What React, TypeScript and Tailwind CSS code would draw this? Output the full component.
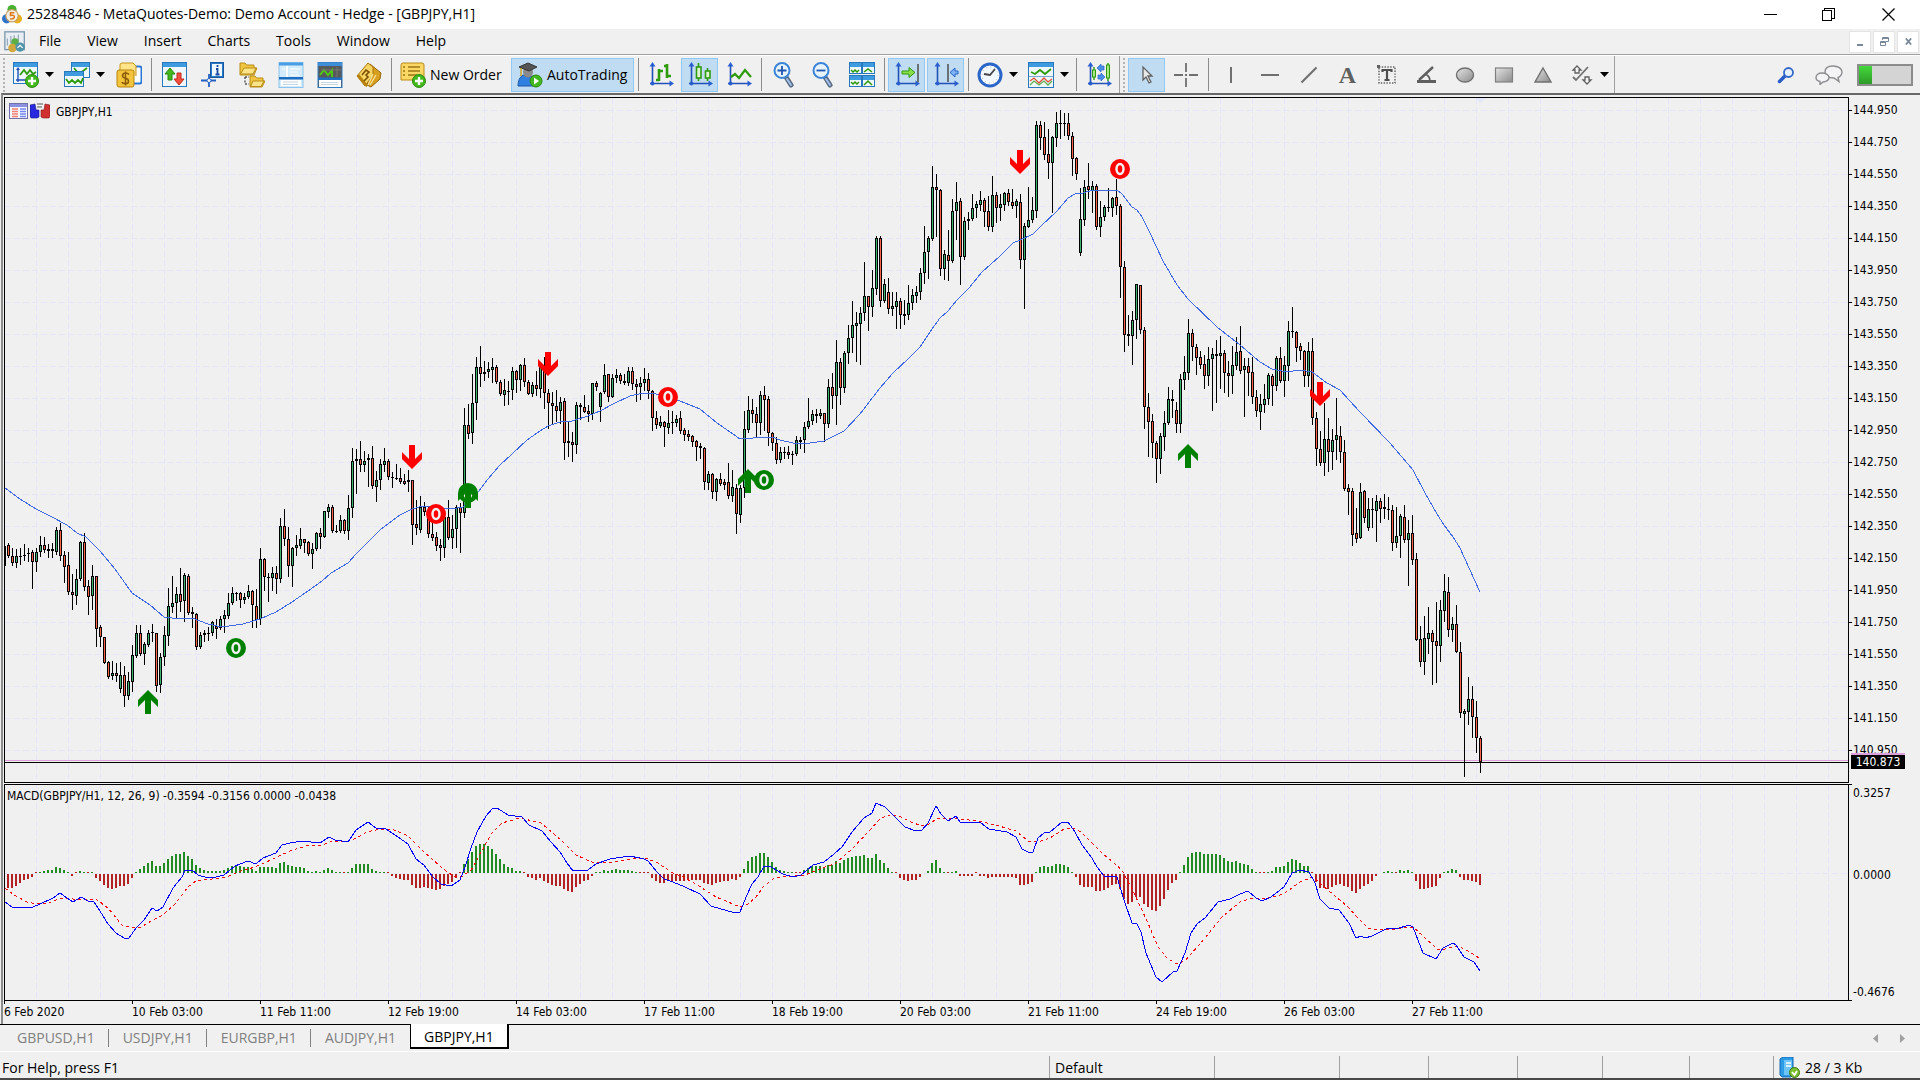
import React from 'react';

const STEP = 4;
const FIRST_BAR = 8;

// high, body top, body bottom, low, direction (g = up, r = down, k = flat)
const CANDLES = `
543 545 556 557 r;548 556 563 565 r;549 556 563 567 g;548 556 557 564 k;544 555 556 560 k;548 553 554 561 k;550 552 562 588 r;548 552 562 571 g;536 545 552 556 g;537 545 550 552 r;
544 549 551 557 k;543 549 551 557 k;527 530 552 554 g;523 530 556 560 r;551 555 567 582 r;552 565 592 594 r;574 592 595 609 r;569 579 596 604 g;541 542 579 580 g;533 542 587 590 r;
580 586 597 614 r;565 576 596 609 g;576 576 629 646 r;625 627 637 646 r;637 637 663 663 r;661 662 677 678 r;661 673 676 679 g;663 673 676 681 r;662 675 689 692 g;666 675 696 706 r;
672 681 696 699 g;645 655 682 691 g;625 633 656 657 g;625 633 654 655 r;642 644 654 664 g;630 633 645 646 g;624 632 633 641 k;633 633 686 691 r;653 657 685 692 g;626 635 657 665 g;
588 606 636 645 g;576 603 607 612 g;587 594 603 617 g;568 594 602 611 r;573 575 601 621 g;574 576 613 614 r;607 612 614 627 k;613 614 647 649 r;632 635 647 648 g;630 633 635 641 g;
627 633 634 640 k;621 622 633 635 g;619 626 629 638 r;616 619 628 629 g;610 615 619 632 g;593 603 616 618 g;587 593 603 604 g;592 593 594 600 k;592 593 600 607 r;593 597 600 603 g;
585 591 597 598 g;590 591 605 627 r;589 606 620 627 r;548 559 619 624 g;558 559 577 590 r;573 577 578 601 k;567 573 578 590 g;566 573 579 593 r;518 526 579 582 g;509 526 539 545 r;
527 539 566 576 r;547 548 566 586 g;535 545 548 555 g;528 539 546 548 g;539 539 543 552 r;541 542 554 555 r;543 549 554 568 g;532 533 549 550 g;528 533 537 548 r;511 511 537 537 g;
504 507 512 517 g;505 507 531 532 r;525 531 532 532 k;515 520 531 532 g;519 520 531 533 r;495 508 531 539 g;448 461 508 517 g;449 459 461 493 k;441 459 465 471 r;451 461 465 471 g;
454 458 460 486 k;446 458 486 488 r;471 480 487 501 g;459 464 480 489 g;448 461 465 471 g;459 461 477 479 r;472 477 478 487 k;464 478 479 479 k;468 478 482 483 r;474 481 484 484 r;
470 480 482 491 g;480 480 525 544 r;500 524 528 534 r;496 507 530 532 g;502 507 512 515 r;507 511 534 537 r;523 534 538 540 r;532 537 546 550 r;539 545 548 560 r;513 517 548 557 g;
500 517 538 539 r;515 529 538 548 g;505 507 529 547 g;503 507 513 552 r;408 425 513 517 g;404 425 434 438 r;374 403 433 443 g;357 367 403 419 g;346 367 374 386 r;361 372 374 380 g;
362 369 372 377 g;358 367 370 382 g;365 367 382 383 r;380 382 394 395 r;379 390 395 405 g;381 391 392 404 k;367 371 390 399 g;370 371 380 392 r;364 365 380 390 g;358 365 382 386 r;
380 382 394 394 r;382 385 394 396 g;371 385 389 395 r;365 367 389 397 g;357 367 393 408 r;389 393 403 428 r;392 403 406 423 r;390 406 411 421 r;397 402 411 423 g;398 401 443 459 r;
421 441 443 456 g;432 442 445 461 r;402 405 445 453 g;403 405 407 419 r;395 407 412 412 r;405 411 414 421 r;383 383 414 419 g;381 383 387 390 r;392 393 407 421 g;364 375 392 393 g;
374 374 397 401 r;374 378 397 397 g;369 375 378 382 g;373 375 381 383 r;374 381 383 384 r;367 371 383 385 g;367 371 384 389 r;379 384 387 401 r;377 383 387 399 g;368 379 383 390 g;
373 379 391 398 r;390 391 418 430 r;411 418 425 428 r;416 422 426 427 g;421 422 427 446 r;410 423 428 433 g;411 422 423 433 k;415 419 423 426 g;411 418 431 433 r;428 430 435 440 r;
430 434 437 440 r;435 436 442 446 r;440 441 447 460 r;443 446 448 458 r;447 448 482 489 r;471 474 483 489 g;473 474 492 498 r;478 479 492 500 g;473 479 484 485 r;479 482 485 489 r;
463 482 496 498 r;470 487 496 501 g;484 488 514 533 r;485 488 515 522 g;411 429 488 497 g;396 410 430 432 g;399 410 414 422 r;407 414 423 437 r;391 395 423 434 g;386 395 400 430 r;
396 399 433 445 r;432 433 443 450 r;437 443 460 463 r;447 452 460 462 g;447 452 453 458 k;446 452 455 458 r;451 454 455 464 k;436 440 454 455 g;437 440 442 448 k;422 427 440 452 g;
398 421 427 428 g;410 414 421 424 g;409 414 416 422 k;409 413 416 418 g;413 413 424 441 r;379 387 424 427 g;373 387 396 408 r;340 362 396 424 g;358 362 388 404 r;351 353 388 392 g;
325 338 353 363 g;301 325 338 352 g;312 323 326 361 g;307 313 324 364 g;262 296 313 320 g;296 296 307 330 r;270 288 307 316 g;236 238 289 294 g;236 238 301 306 r;279 284 301 302 g;
278 292 309 313 r;292 306 309 315 g;292 301 307 328 g;298 301 315 328 r;300 314 316 324 k;285 303 315 319 g;289 295 303 309 g;286 292 296 302 g;268 273 292 299 g;226 252 273 283 g;
236 238 252 278 g;166 187 239 240 g;174 187 190 236 r;189 190 269 275 r;250 254 269 279 g;230 255 261 280 r;199 211 261 262 g;182 202 211 239 g;198 201 257 284 r;217 221 257 259 g;
212 219 221 229 g;194 208 219 220 g;201 204 208 217 g;191 200 205 210 g;198 200 212 226 r;196 211 227 230 r;176 195 227 231 g;192 195 208 222 r;194 204 208 220 g;192 193 205 210 g;
189 193 202 205 r;189 202 206 208 r;199 201 206 217 g;194 202 260 268 r;223 226 260 308 g;187 220 227 227 g;197 210 220 222 g;121 125 211 217 g;121 125 138 149 r;122 137 155 159 r;
129 154 163 178 r;136 137 163 212 g;112 123 138 146 g;110 123 124 138 k;113 123 124 135 k;113 123 136 139 r;132 136 159 175 r;157 158 174 179 r;188 219 253 255 g;180 187 220 225 g;
163 186 190 198 r;181 186 191 212 g;184 186 227 229 r;201 217 227 236 g;205 207 217 220 g;188 207 208 211 k;197 198 208 216 g;179 197 206 214 r;204 206 267 297 r;261 267 335 351 r;
315 334 336 345 k;311 320 336 364 g;284 284 320 338 g;285 285 330 333 r;327 330 407 428 r;393 407 422 456 r;414 421 443 457 r;441 443 459 482 r;433 436 459 473 g;411 423 437 450 g;
387 399 423 424 g;390 399 401 417 k;402 410 424 432 r;374 379 424 432 g;356 372 380 389 g;319 333 373 379 g;329 333 347 360 r;344 347 358 374 r;351 357 365 368 r;355 364 376 388 r;
347 359 376 385 g;348 354 359 410 g;340 354 356 402 k;336 353 356 388 g;350 353 373 392 r;361 373 376 396 r;346 365 376 393 g;337 352 366 369 g;326 351 371 373 r;358 366 370 416 g;
358 366 373 395 r;357 372 397 403 r;390 397 411 416 r;394 404 412 429 g;384 399 405 412 g;373 375 399 404 g;374 376 386 405 r;356 358 386 390 g;347 358 381 382 r;356 365 381 396 g;
321 331 366 380 g;307 331 332 337 k;331 332 348 361 r;343 346 351 359 r;350 351 376 386 r;342 351 376 386 g;338 351 418 424 r;412 418 449 465 r;431 449 463 465 r;403 439 463 475 g;
418 439 452 471 r;429 440 452 469 g;398 435 440 459 g;426 436 452 462 r;440 452 489 490 r;484 488 492 514 r;488 491 535 545 r;508 533 539 542 r;483 492 538 538 g;490 491 518 522 r;
498 509 528 530 g;498 509 510 527 k;495 501 511 541 g;498 501 509 522 r;494 507 509 518 k;497 509 510 519 k;505 510 543 550 r;507 536 543 547 g;514 516 536 557 g;505 517 540 542 r;
520 533 540 585 g;515 533 560 564 r;553 559 640 640 r;626 639 662 666 r;616 638 662 674 g;607 633 639 653 g;630 633 642 684 r;602 641 646 682 r;600 610 646 661 g;574 591 611 621 g;
577 592 630 636 r;617 624 630 641 g;605 624 652 652 r;642 652 713 717 r;709 711 714 776 g;677 699 712 724 g;686 699 717 737 r;701 717 738 752 r;736 738 762 772 r`;

const HISTOGRAM = [
  -14, -14, -12, -9, -6, -5, -3, -1, 1, 2, 3, 3, 6, 5, 3, 1, -2, -1, 2, 1, -1, 1, -4, -7, -11, -14, -15, -14, -12, -12,
  -10, -4, 1, 4, 7, 10, 12, 7, 7, 10, 14, 17, 19, 19, 21, 17, 14, 8, 5, 3, 2, 2, 2, 2, 3, 5, 7, 7, 7, 6,
  6, 4, 2, 6, 6, 6, 6, 5, 10, 11, 8, 7, 6, 6, 5, 2, 1, 2, 1, 3, 5, 3, 1, 1, -1, 1, 5, 9, 9, 9,
  9, 4, 2, 1, 1, -1, -2, -4, -5, -6, -6, -11, -14, -14, -13, -14, -15, -16, -15, -12, -10, -8, -4, -1, 9, 14, 21, 27, 29, 29,
  27, 24, 19, 14, 9, 6, 5, 2, 2, -1, -3, -4, -6, -4, -7, -9, -11, -12, -12, -15, -17, -18, -13, -10, -7, -6, -2, 1, 1, 3,
  2, 3, 4, 3, 3, 3, 2, 1, -1, -1, -1, -4, -7, -9, -9, -7, -7, -7, -7, -7, -6, -6, -6, -6, -9, -10, -11, -9, -8, -7,
  -7, -5, -6, -3, 4, 12, 16, 17, 20, 20, 16, 11, 6, 3, 2, 1, 1, -1, -1, 3, 5, 7, 7, 7, 5, 8, 8, 12, 10, 13,
  15, 16, 17, 17, 18, 15, 15, 19, 13, 10, 5, 1, -1, -4, -6, -7, -6, -6, -3, 0, 2, 10, 13, 5, 1, -1, 1, 2, -2, -2,
  -2, -2, -1, -2, -2, -4, -3, -3, -3, -3, -3, -3, -4, -11, -11, -10, -8, 1, 6, 7, 6, 7, 9, 9, 8, 6, 1, -3, -11, -13,
  -13, -13, -17, -17, -16, -14, -11, -10, -15, -25, -30, -28, -23, -23, -30, -33, -36, -37, -32, -25, -16, -9, -6, 1, 8, 16, 20, 21, 21, 19,
  19, 19, 19, 18, 15, 12, 11, 12, 10, 9, 8, 4, 1, -1, -1, 1, 2, 6, 6, 7, 11, 14, 13, 10, 7, 7, -1, -8, -14, -14,
  -15, -13, -11, -10, -12, -13, -17, -19, -15, -12, -10, -7, -2, 0, 1, 2, 1, -1, 3, 2, 3, 1, -7, -15, -15, -14, -13, -12, -4, 1,
  2, 4, 3, -3, -6, -6, -7, -8, -11,
];

const MOVING_AVERAGE =
  '5,488 20,499 36,509 50,516 67,525 77,533 86,537 100,551 115,569 132,593 150,605 164,617 172,618 192,618 208,624 222,627 243,624 260,619 276,612 292,602 308,591 322,581 331,573 348,563 356,554 367,543 380,530 388,524 400,515 412,509 423,506 443,508 452,509 463,507 478,492 488,479 500,465 512,454 527,440 540,431 548,426 560,422 572,421 588,416 600,411 613,404 630,396 643,393 653,393 667,398 680,401 700,409 717,423 733,434 740,439 753,438 765,437 772,437 780,440 793,443 803,444 824,441 844,431 860,414 873,397 880,388 893,373 908,359 920,347 932,329 940,318 948,311 957,300 969,288 982,272 1000,256 1013,243 1020,240 1033,234 1040,227 1057,211 1068,198 1075,194 1083,193 1093,190 1097,190 1117,190 1122,194 1132,207 1137,210 1142,217 1150,233 1163,261 1177,285 1188,299 1217,327 1240,345 1260,362 1272,369 1287,372 1300,370 1312,372 1327,383 1340,390 1360,412 1390,443 1413,470 1425,493 1437,514 1444,525 1453,537 1460,548 1470,570 1480,592';

const MACD_LINE =
  '5,902 12,907 17,908 33,907 40,904 53,898 60,893 67,898 73,902 81,897 88,901 94,902 100,911 108,924 116,933 124,938 129,938 136,928 144,920 152,908 157,911 163,907 173,888 182,877 185,870 192,870 198,875 208,878 216,877 224,875 235,866 248,861 256,864 263,858 276,853 282,845 290,843 302,841 320,843 329,837 335,840 348,842 356,830 368,822 376,828 386,829 398,837 408,844 416,859 424,865 433,877 441,884 451,886 460,880 465,867 471,848 477,832 486,816 493,808 497,808 508,815 522,817 529,825 542,831 551,842 560,852 567,863 573,871 580,870 588,870 596,864 610,859 629,856 640,858 644,859 648,861 657,872 664,879 673,882 685,887 700,894 711,906 728,911 736,913 740,912 747,895 752,884 758,877 764,866 771,867 783,874 793,877 801,875 813,865 824,862 834,854 842,847 852,832 864,818 872,813 876,803 885,807 895,817 905,827 916,831 922,830 928,823 936,806 941,814 948,821 956,816 960,822 981,823 989,829 1007,832 1016,837 1022,849 1028,852 1033,852 1038,838 1044,833 1050,832 1062,822 1068,822 1075,832 1082,845 1092,858 1097,867 1104,876 1117,877 1124,900 1132,923 1137,924 1141,932 1146,953 1156,977 1162,982 1173,972 1177,971 1185,953 1191,933 1197,924 1205,918 1218,902 1230,899 1240,894 1248,891 1256,898 1262,901 1271,897 1280,890 1284,887 1292,873 1300,870 1309,872 1315,883 1320,899 1329,908 1339,910 1349,923 1356,938 1361,936 1365,938 1372,936 1388,928 1396,929 1409,925 1413,927 1423,953 1436,959 1443,948 1453,943 1456,945 1464,957 1474,962 1480,971';

const SIGNAL_LINE =
  '5,888 14,895 27,902 37,904 49,903 61,898 73,899 96,899 108,908 122,925 133,928 141,927 153,920 163,915 176,903 188,887 196,881 212,879 227,877 241,871 255,867 273,859 290,851 306,846 322,845 333,841 349,841 357,838 367,832 380,829 394,830 408,836 424,852 441,867 453,876 463,876 471,870 476,862 486,843 492,833 502,823 520,818 541,823 561,840 576,855 594,863 612,862 640,858 648,859 658,863 671,872 685,878 699,886 716,897 740,907 748,904 756,897 764,886 773,879 781,877 805,875 820,869 836,863 852,849 869,831 881,818 889,815 899,816 911,822 922,826 929,824 938,818 954,818 983,822 999,826 1016,831 1028,841 1038,842 1050,838 1064,829 1073,828 1081,832 1101,852 1122,870 1134,893 1148,923 1158,947 1167,958 1177,964 1185,961 1205,938 1222,917 1240,902 1252,898 1264,899 1280,895 1288,891 1300,882 1313,877 1321,884 1329,891 1347,906 1358,918 1368,928 1380,930 1396,929 1413,927 1423,936 1437,949 1445,949 1458,946 1468,951 1479,958';

const PRICES = [
  '144.950', '144.750', '144.550', '144.350', '144.150', '143.950', '143.750', '143.550', '143.350',
  '143.150', '142.950', '142.750', '142.550', '142.350', '142.150', '141.950', '141.750', '141.550',
  '141.350', '141.150', '140.950',
];

const TIMES = [
  '6 Feb 2020', '10 Feb 03:00', '11 Feb 11:00', '12 Feb 19:00', '14 Feb 03:00', '17 Feb 11:00',
  '18 Feb 19:00', '20 Feb 03:00', '21 Feb 11:00', '24 Feb 19:00', '26 Feb 03:00', '27 Feb 11:00',
];

const MENUS = ['File', 'View', 'Insert', 'Charts', 'Tools', 'Window', 'Help'];

const CHART_TABS = ['GBPUSD,H1', 'USDJPY,H1', 'EURGBP,H1', 'AUDJPY,H1', 'GBPJPY,H1'];

const GRID_X = Array.from({ length: 120 }, (_, i) => 36 + i * 32);
const GRID_Y = Array.from({ length: 21 }, (_, i) => 110 + i * 32);

const candles = CANDLES.trim().split(';').map((row, i) => {
  const [high, top, bottom, low, dir] = row.trim().split(' ');
  return { x: FIRST_BAR + i * STEP, high: +high, top: +top, bottom: +bottom, low: +low, dir };
});

const FILL: Record<string, string> = { g: '#3cb371', r: '#ff6347', k: '#000' };

type Mark = { kind: 'up' | 'down' | 'zero'; x: number; y: number; color: string };

const MARKS: Mark[] = [
  { kind: 'up', x: 148, y: 702, color: '#008000' },
  { kind: 'zero', x: 236, y: 648, color: '#008000' },
  { kind: 'down', x: 412, y: 457, color: '#ff0000' },
  { kind: 'zero', x: 436, y: 514, color: '#ff0000' },
  { kind: 'zero', x: 468, y: 493, color: '#008000' },
  { kind: 'up', x: 468, y: 496, color: '#008000' },
  { kind: 'down', x: 548, y: 364, color: '#ff0000' },
  { kind: 'zero', x: 668, y: 397, color: '#ff0000' },
  { kind: 'up', x: 748, y: 481, color: '#008000' },
  { kind: 'zero', x: 764, y: 480, color: '#008000' },
  { kind: 'down', x: 1020, y: 162, color: '#ff0000' },
  { kind: 'zero', x: 1120, y: 169, color: '#ff0000' },
  { kind: 'up', x: 1188, y: 456, color: '#008000' },
  { kind: 'down', x: 1320, y: 394, color: '#ff0000' },
];

const SignalMark = ({ kind, x, y, color }: Mark) => {
  if (kind === 'zero') {
    return (
      <g>
        <circle cx={x} cy={y} r="10" fill={color} />
        <ellipse cx={x} cy={y} rx="3.5" ry="5" fill="none" stroke="#f0f0f0" strokeWidth="2.5" />
      </g>
    );
  }
  const flip = kind === 'down' ? 'scale(1 -1)' : '';
  return (
    <path
      transform={`translate(${x} ${y}) ${flip}`}
      d="M0 -12 L10 -2 V5 L3 -2 V12 H-3 V-2 L-10 5 V-2 Z"
      fill={color}
    />
  );
};

const PriceChart = () => (
  <svg className="absolute inset-0 w-full h-full" role="img" aria-label="GBPJPY H1 price chart">
    <g transform="translate(-5 -98)">
      <g stroke="#e6e6fa" strokeDasharray="6 3" shapeRendering="crispEdges">
        {GRID_X.map((x) => (
          <line key={x} x1={x + 0.5} x2={x + 0.5} y1="98" y2="900" />
        ))}
        {GRID_Y.map((y) => (
          <line key={y} x1="5" x2="4000" y1={y + 0.5} y2={y + 0.5} />
        ))}
      </g>
      <path d="M1475 98 H1486 L1480.5 103 Z" fill="#e6e6fa" />
      <g shapeRendering="crispEdges">
        <line x1="5" x2="4000" y1="760.5" y2="760.5" stroke="#dda0dd" />
        <rect x="5" y="546" width="1" height="20" />
        {candles.map((c) => (
          <g key={c.x}>
            <rect x={c.x} y={c.high} width="1" height={c.low - c.high + 1} />
            <rect x={c.x - 1} y={c.top} width="3" height={c.bottom - c.top} />
            {c.bottom - c.top > 2 && (
              <rect x={c.x} y={c.top + 1} width="1" height={c.bottom - c.top - 2} fill={FILL[c.dir]} />
            )}
          </g>
        ))}
        <line x1="5" x2="4000" y1="762.5" y2="762.5" stroke="#000" />
        <polyline points={MOVING_AVERAGE} fill="none" stroke="#4169e1" />
      </g>
      {MARKS.map((m) => (
        <SignalMark key={`${m.kind}${m.x}`} {...m} />
      ))}
    </g>
  </svg>
);

const MacdChart = () => (
  <svg className="absolute inset-0 w-full h-full" role="img" aria-label="MACD indicator">
    <g transform="translate(-5 -785)" shapeRendering="crispEdges">
      <g stroke="#e6e6fa" strokeDasharray="6 3">
        {GRID_X.map((x) => (
          <line key={x} x1={x + 0.5} x2={x + 0.5} y1="785" y2="1400" />
        ))}
        <line x1="5" x2="4000" y1="873.5" y2="873.5" />
      </g>
      {HISTOGRAM.map((h, i) => {
        const x = FIRST_BAR + i * STEP - 1;
        if (h === 0) return null;
        return h > 0 ? (
          <rect key={i} x={x} y={873 - h} width="2" height={h} fill="#228b22" />
        ) : (
          <rect key={i} x={x} y={h === -1 ? 872 : 874} width="2" height={-h} fill="#b22222" />
        );
      })}
      <polyline points={SIGNAL_LINE} fill="none" stroke="#ff0000" strokeDasharray="3 3" />
      <polyline points={MACD_LINE} fill="none" stroke="#0000ff" />
    </g>
  </svg>
);

/* ---------- icons ---------- */

const Svg = ({ children, className = 'w-[26px] h-[26px]' }: { children: React.ReactNode; className?: string }) => (
  <svg viewBox="0 0 26 26" className={`${className} shrink-0`} fill="none" aria-hidden="true">
    {children}
  </svg>
);

const Plus = () => (
  <>
    <circle cx="19" cy="19" r="6.5" fill="#43b81c" stroke="#2b8a0e" />
    <path d="M19 15v8M15 19h8" stroke="#fff" strokeWidth="2.4" />
  </>
);

const Pane = ({ x, y, w, h }: { x: number; y: number; w: number; h: number }) => (
  <>
    <rect x={x + 0.5} y={y + 0.5} width={w - 1} height={h - 1} fill="#eef7fd" stroke="#2878bd" />
    <rect x={x + 1} y={y + 1} width={w - 2} height="4" fill="#3f9be0" />
  </>
);

const Axes = () => (
  <>
    <path d="M4.5 3v20M2 21.5h20" stroke="#2050b8" strokeWidth="1.6" />
    <path d="M4.5 0l3 4.5h-6zM26 21.5l-4.500 3v-6z" fill="#2a5fd0" />
    <circle cx="4.5" cy="21.5" r="2" fill="#2a5fd0" />
  </>
);

const IconNewChart = () => (
  <Svg>
    <Pane x={0} y={0} w={25} h={22} />
    <path d="M5 7v13M3 18h14" stroke="#2050b8" strokeWidth="1.4" />
    <path d="M5 5l2 3H3z" fill="#2050b8" />
    <path d="M7 13l4-5 3 4 3-4 3 4 3-2" stroke="#2e9b0c" strokeWidth="1.8" />
    <Plus />
  </Svg>
);

const IconProfiles = () => (
  <Svg>
    <Pane x={7} y={0} w={19} h={16} />
    <path d="M10 6l5 6 8-6" stroke="#2e9b0c" strokeWidth="1.8" />
    <Pane x={0} y={9} w={20} h={16} />
    <path d="M2 17l3 4 3-3 3 3 3-3 3 3 2-5" stroke="#2e9b0c" strokeWidth="1.8" />
  </Svg>
);

const IconSymbols = () => (
  <Svg>
    <rect x="9.500" y="4.500" width="16" height="17" rx="2" fill="#fff" stroke="#2878d8" strokeWidth="2" />
    <path d="M4 8V3q0-2 2-2h11l3 3v10" fill="#ffe48a" stroke="#c89418" />
    <rect x="1" y="8" width="17" height="17" rx="2" fill="#f3c53c" stroke="#b88410" />
    <path d="M13 12.500q-1-1.500-3.500-1.500T6.500 13.500q0 2 3 2.700t3 3q0 2.500-3 2.500T6 20M9.500 9.500v14" stroke="#8c5c08" strokeWidth="1.5" />
  </Svg>
);

const IconMarketWatch = () => (
  <Svg>
    <Pane x={1} y={0} w={25} h={25} />
    <path d="M9 6l5 6h-3v6H7v-6H4z" fill="#43b81c" stroke="#2b8a0e" />
    <path d="M18 23l5-6h-3v-6h-4v6h-3z" fill="#f2503c" stroke="#c02a1a" />
  </Svg>
);

const IconDataWindow = () => (
  <Svg>
    <rect x="10.500" y="0.500" width="13" height="15" fill="#2878c8" stroke="#1858a0" />
    <rect x="12" y="2" width="10" height="12" fill="#eef7fd" />
    <path d="M17.500 3v2M16 7h1.500v5M15.500 12.500h4" stroke="#1848a0" strokeWidth="1.8" />
    <path d="M9 12v13M1 18.500h15" stroke="#2460c0" strokeWidth="1.8" />
    <circle cx="9" cy="18.500" r="2" fill="#fff" stroke="#2460c0" />
  </Svg>
);

const IconNavigator = () => (
  <Svg>
    <path d="M1 12V1h5l1.500 2H15v3h3l-3 7H1z" fill="#f0c540" stroke="#b98c18" />
    <path d="M1.500 12L5 6h12l-3 6z" fill="#fbe48a" stroke="#b98c18" />
    <path d="M6 15v7M6 15h4M6 22h4" stroke="#555" strokeDasharray="2 1.500" strokeWidth="1.400" />
    <path d="M11 25V14h5l1.500 2H24v3h2l-3 6z" fill="#f0c540" stroke="#b98c18" />
    <path d="M11.500 24.500L14 19h11l-3 5.500z" fill="#fbe48a" stroke="#b98c18" />
  </Svg>
);

const IconToolbox = () => (
  <Svg>
    <rect x="1" y="0.500" width="24" height="25" fill="#d3ebfb" stroke="#8cc4ee" />
    <rect x="1" y="0.500" width="24" height="3" fill="#4a9fe4" />
    <path d="M9 4v11" stroke="#fff" strokeWidth="2" />
    <path d="M4 7h3M12 7h10M12 10h8M12 13h9" stroke="#fff" />
    <rect x="1" y="15" width="24" height="2.500" fill="#1f6fc0" />
    <path d="M3 18h20v6H3z" fill="#fff" />
    <path d="M5 20h15M5 22.500h15" stroke="#c4d4e0" />
  </Svg>
);

const IconTester = () => (
  <Svg>
    <rect x="1" y="0.500" width="24" height="25" fill="#595959" stroke="#2f7cc2" />
    <rect x="1" y="0.500" width="24" height="3.500" fill="#3f8fd8" />
    <path d="M3 13l4-5 4 5 4-5v7" stroke="#4ed010" strokeWidth="1.800" />
    <path d="M20 5v10M4 8h20" stroke="#777" />
    <rect x="1" y="15.500" width="24" height="2.500" fill="#1f6fc0" />
    <path d="M2 18h22v7H2z" fill="#fff" />
    <path d="M4 20.500h17M4 22.500h17" stroke="#c4d4e0" />
  </Svg>
);

const IconMetaEditor = () => (
  <Svg>
    <path d="M14 2l11 9-1 6-9 8-4-2 4-12z" fill="#d9a020" stroke="#94640a" />
    <path d="M1 14L12 1l5 4v8l-8 11z" fill="#f6d565" stroke="#a87408" />
    <path d="M1 14l8 10 2 1v-3L3 12z" fill="#b98210" />
    <path d="M6 13l4-5 3 2-3 3 2 2-4 4" stroke="#7c5004" strokeWidth="1.600" />
    <path d="M17 12l-5 11M20 13l-6 10" stroke="#fae9a4" strokeWidth="1.200" />
  </Svg>
);

const IconNewOrder = () => (
  <Svg>
    <path d="M1 3q0-2 2-2h19q2 0 2 2v15H1z" fill="#f9d865" stroke="#b98c18" />
    <path d="M8 5h12M8 9h12M8 13h9" stroke="#9a7414" strokeWidth="1.500" />
    <path d="M3 5h2M3 9h2M3 13h2" stroke="#9a7414" strokeWidth="1.500" />
    <Plus />
  </Svg>
);

const IconAutoTrading = () => (
  <Svg>
    <path d="M1 24q0-8 5-11l5 2 5-1q5 2 5 10z" fill="#2f80e0" stroke="#1c55a8" />
    <ellipse cx="11" cy="10" rx="5" ry="5.500" fill="#8a8a8a" />
    <path d="M2 5l9-4 9 4-8 4z" fill="#555" stroke="#333" />
    <path d="M4 6v8" stroke="#c9a020" strokeWidth="1.500" />
    <circle cx="19" cy="19" r="6" fill="#43b81c" stroke="#2b8a0e" />
    <path d="M17 15.500v7l5-3.500z" fill="#fff" />
  </Svg>
);

const IconBars = () => (
  <Svg>
    <Axes />
    <path d="M11 7v12M8 18h3M11 9h4M19 2v14M16 4h3M19 14h4" stroke="#2e9b0c" strokeWidth="2.600" />
  </Svg>
);

const IconCandles = () => (
  <Svg>
    <Axes />
    <path d="M11.500 1v18M20.500 6v13" stroke="#2e9b0c" strokeWidth="1.600" />
    <rect x="9.500" y="5" width="4.500" height="11" fill="#dff5d2" stroke="#2e9b0c" strokeWidth="1.600" />
    <rect x="18.500" y="9" width="4.500" height="7" fill="#dff5d2" stroke="#2e9b0c" strokeWidth="1.600" />
  </Svg>
);

const IconLine = () => (
  <Svg>
    <Axes />
    <path d="M5 15l4-3 4 4 6-8 6 7" stroke="#2e9b0c" strokeWidth="2.200" />
  </Svg>
);

const Magnifier = ({ plus }: { plus?: boolean }) => (
  <Svg>
    <path d="M15 15l5 8" stroke="#5a6a80" strokeWidth="5" strokeLinecap="round" />
    <path d="M16 17l4 6" stroke="#9fc0ee" strokeWidth="2" strokeLinecap="round" />
    <circle cx="11" cy="8.500" r="7.500" fill="#e8f4fd" stroke="#3b84d8" strokeWidth="2" />
    <path d={plus ? 'M11 4v9M6.500 8.500h9' : 'M6.500 8.500h9'} stroke="#1f56b0" strokeWidth="1.800" />
  </Svg>
);

const IconTile = () => (
  <Svg>
    <Pane x={0} y={0} w={13} h={12} />
    <Pane x={13} y={0} w={13} h={12} />
    <Pane x={0} y={13} w={13} h={12} />
    <Pane x={13} y={13} w={13} h={12} />
    <path d="M2 8l2 2 2-2 2 2 2-2M15 10l4-3 4 3M2 20l2 2 2-2 2 2 2-2M15 23l4-4 4 4" stroke="#2e9b0c" strokeWidth="1.500" />
  </Svg>
);

const IconAutoScroll = () => (
  <Svg>
    <Axes />
    <path d="M24 2v18" stroke="#444" strokeWidth="1.400" />
    <path d="M8 9h7V5.500l6 5-6 5V12H8z" fill="#8ade4c" stroke="#2e9b0c" />
  </Svg>
);

const IconShift = () => (
  <Svg>
    <Axes />
    <path d="M15 2v18" stroke="#444" strokeWidth="1.400" />
    <path d="M25 9h-3V6l-5 4.500 5 4.500v-3h3z" fill="#7ab4f4" stroke="#2a62c8" />
  </Svg>
);

const IconClock = () => (
  <Svg>
    <circle cx="13" cy="13" r="11" fill="#fff" stroke="#2a66c8" strokeWidth="3" />
    <circle cx="13" cy="13" r="8" fill="#f2f8ff" stroke="#a8b8d0" strokeDasharray="1 3.200" />
    <path d="M7 12l6 1 5-6" stroke="#444" strokeWidth="1.800" />
  </Svg>
);

const IconTemplates = () => (
  <Svg>
    <Pane x={0} y={0} w={26} h={26} />
    <path d="M3 10l4 2 5-4 5 4 6-5" stroke="#2e9b0c" strokeWidth="1.800" />
    <path d="M1 14.500h24" stroke="#7aa8c8" />
    <path d="M2 19l4-3 5 5 5-5 4 4 4-3" stroke="#e05038" strokeWidth="1.300" />
    <path d="M2 23l4-4 5 4 5-4 4 4 4-4" stroke="#60b050" strokeWidth="1.300" />
  </Svg>
);

const IconTradeLevels = () => (
  <Svg>
    <Axes />
    <path d="M8 5v13M22 1v18" stroke="#2e9b0c" strokeWidth="1.400" />
    <rect x="6.500" y="8" width="3" height="7" fill="#a8e888" stroke="#2e9b0c" />
    <rect x="20.500" y="3" width="3" height="13" fill="#a8e888" stroke="#2e9b0c" />
    <path d="M18 4h-3V2l-4 4 4 4V8h3zM12 13h3v-2l4 4-4 4v-2h-3z" fill="#4a90e8" stroke="#2a62c8" strokeWidth="0.700" />
  </Svg>
);

const IconCursor = () => (
  <Svg>
    <path d="M9 5v13l3-3 3 6 2-1-3-6h4z" fill="#e8e8e8" stroke="#606060" strokeWidth="1.300" />
  </Svg>
);

const IconCrosshair = () => (
  <Svg>
    <path d="M13 1v9M13 16v9M1 13h9M16 13h9M12 13h2" stroke="#707070" strokeWidth="1.800" />
  </Svg>
);

const IconVLine = () => (
  <Svg>
    <path d="M13 5v16" stroke="#707070" strokeWidth="2" />
  </Svg>
);

const IconHLine = () => (
  <Svg>
    <path d="M4 13h18" stroke="#707070" strokeWidth="2" />
  </Svg>
);

const IconTrend = () => (
  <Svg>
    <path d="M5.500 20.500L20.500 5.500" stroke="#707070" strokeWidth="2.200" />
  </Svg>
);

const IconTextLabel = () => (
  <Svg>
    <rect x="5" y="5" width="16" height="16" stroke="#606060" strokeWidth="1.400" strokeDasharray="1.400 1.400" />
    <path d="M8.500 10V8h9v2M13 8v10M10.500 18h5" stroke="#505050" strokeWidth="2.200" />
    <rect x="3" y="3" width="3" height="3" fill="#606060" />
  </Svg>
);

const IconAngle = () => (
  <Svg>
    <path d="M20 5L6 18" stroke="#606060" strokeWidth="2.400" />
    <path d="M4 19.500h19" stroke="#606060" strokeWidth="3" />
    <path d="M12 12q5 2 5 7" stroke="#606060" strokeWidth="1.800" />
  </Svg>
);

const Shade = ({ id }: { id: string }) => (
  <defs>
    <linearGradient id={id} x1="0" y1="0" x2="1" y2="1">
      <stop offset="0" stopColor="#e4e4e4" />
      <stop offset="1" stopColor="#8c8c8c" />
    </linearGradient>
  </defs>
);

const IconEllipse = () => (
  <Svg>
    <Shade id="shade-ellipse" />
    <ellipse cx="13" cy="13" rx="8.500" ry="7" fill="url(#shade-ellipse)" stroke="#707070" strokeWidth="1.400" />
  </Svg>
);

const IconRect = () => (
  <Svg>
    <Shade id="shade-rect" />
    <rect x="4.500" y="6" width="17" height="14" fill="url(#shade-rect)" stroke="#808080" strokeWidth="1.200" />
  </Svg>
);

const IconTriangle = () => (
  <Svg>
    <Shade id="shade-triangle" />
    <path d="M13 6l8 14H5z" fill="url(#shade-triangle)" stroke="#707070" strokeWidth="1.400" />
  </Svg>
);

const IconObjects = () => (
  <Svg>
    <path d="M9 4l4 4h-2v3H7V8H5zM19 22l-4-4h2v-3h4v3h2z" fill="#f4f4f4" stroke="#606060" strokeWidth="1.300" />
    <path d="M5 15l3 3 12-13" stroke="#707070" strokeWidth="1.800" />
  </Svg>
);

const AppLogo = () => (
  <Svg className="w-[20px] h-[20px]">
    <circle cx="6" cy="18" r="6" fill="#2f74c8" />
    <circle cx="20" cy="18" r="6" fill="#e8b020" />
    <circle cx="13" cy="6" r="6" fill="#48b030" />
    <circle cx="13" cy="14" r="8" fill="#f4f0e8" stroke="#c8a060" strokeWidth="1.500" />
    <path d="M16 10h-5v3.500q5-1 5 2t-5.500 2.500" stroke="#e07818" strokeWidth="2" />
  </Svg>
);

const ChartDocIcon = () => (
  <Svg className="w-[22px] h-[22px]">
    <rect x="1" y="1" width="23" height="21" fill="#e8eef4" stroke="#7894ac" strokeWidth="1.500" />
    <path d="M4 17V9M8 15V6M12 13V5M17 12V4" stroke="#9aacba" strokeWidth="1.500" />
    <circle cx="13" cy="13" r="4.500" fill="#5cae48" />
    <circle cx="10" cy="20" r="5" fill="#d0a83c" />
    <circle cx="19" cy="19" r="5.500" fill="#4f94a8" />
    <path d="M16 20l3-3 3 3" stroke="#fff" strokeWidth="1.500" />
  </Svg>
);

/* ---------- toolbar parts ---------- */

type ToolProps = { label: string; active?: boolean; drop?: boolean; children: React.ReactNode };

const Tool = ({ label, active, drop, children }: ToolProps) => (
  <button
    type="button"
    aria-label={label}
    title={label}
    aria-pressed={active}
    className={`h-[34px] shrink-0 flex items-center border ${drop ? 'w-[49px] pl-1' : 'w-[37px] justify-center'} ${
      active ? 'bg-[#c0dcf3] border-[#90c8f6]' : 'border-transparent'
    }`}
  >
    {children}
    {drop && (
      <svg viewBox="0 0 9 5" className="w-[9px] h-[5px] ml-[6px] shrink-0" aria-hidden="true">
        <path d="M0 0h9L4.500 5z" />
      </svg>
    )}
  </button>
);

const Sep = () => (
  <div className="w-1 h-[33px] shrink-0 flex justify-center">
    <div className="w-px bg-[#8c8c8c]" />
  </div>
);

const Grip = () => <div className="w-0.5 h-[34px] mx-px shrink-0 border-l-2 border-dotted border-[#b4b4b4]" />;

const TitleBar = () => (
  <header className="h-[29px] shrink-0 bg-white flex items-center pl-0.5">
    <AppLogo />
    <h1 className="ml-[5px] pb-0.5 text-[14px] leading-5 whitespace-nowrap">
      25284846 - MetaQuotes-Demo: Demo Account - Hedge - [GBPJPY,H1]
    </h1>
    <div className="ml-auto flex h-full">
      <button type="button" aria-label="Minimize" className="w-[58px] flex items-center justify-center">
        <svg viewBox="0 0 13 13" className="w-[13px] h-[13px]" stroke="#000" shapeRendering="crispEdges">
          <path d="M0 6.500h13" />
        </svg>
      </button>
      <button type="button" aria-label="Restore" className="w-[58px] flex items-center justify-center">
        <svg viewBox="0 0 13 13" className="w-[13px] h-[13px]" fill="none" stroke="#000" shapeRendering="crispEdges">
          <path d="M0.500 2.500h9v10h-9zM2.500 2V0.500h10v10H10" />
        </svg>
      </button>
      <button type="button" aria-label="Close" className="w-[63px] flex items-center justify-center">
        <svg viewBox="0 0 13 13" className="w-[13px] h-[13px]" stroke="#000" strokeWidth="1.200">
          <path d="M0.500 0.500l12 12M12.500 0.500l-12 12" />
        </svg>
      </button>
    </div>
  </header>
);

const MenuBar = () => (
  <nav className="h-[26px] shrink-0 flex items-center pl-1 border-b border-[#a0a0a0]">
    <ChartDocIcon />
    {MENUS.map((menu) => (
      <button key={menu} type="button" className="px-[13px] pb-0.5 text-[14px] leading-5">
        {menu}
      </button>
    ))}
    <div className="ml-auto flex gap-0.5 pr-px h-[22px]">
      <button type="button" aria-label="Minimize chart" className="w-[22px] bg-white border border-[#e4e4e4] flex items-center justify-center">
        <span className="w-[6px] h-0.5 mt-[6px] bg-[#788898]" />
      </button>
      <button type="button" aria-label="Restore chart" className="w-[22px] bg-white border border-[#e4e4e4] flex items-center justify-center">
        <svg viewBox="0 0 9 9" className="w-[9px] h-[9px]" fill="none" stroke="#788898">
          <path d="M0.500 4.500h5v4h-5zM0.500 5.500h5M2.500 3V0.500h6v4H6M2.500 1.500h6" />
        </svg>
      </button>
      <button type="button" aria-label="Close chart" className="w-[22px] bg-white border border-[#e4e4e4] flex items-center justify-center">
        <svg viewBox="0 0 8 8" className="w-[7px] h-[7px]" stroke="#788898" strokeWidth="2">
          <path d="M1 0.500l6 7M7 0.500l-6 7" />
        </svg>
      </button>
    </div>
  </nav>
);

const Toolbar = () => (
  <div className="h-[38px] shrink-0 flex items-center gap-0.5 pl-0.5 border-t border-white" role="toolbar">
    <Grip />
    <Tool label="New Chart" drop><IconNewChart /></Tool>
    <Tool label="Profiles" drop><IconProfiles /></Tool>
    <Tool label="Symbols"><IconSymbols /></Tool>
    <Sep />
    <Tool label="Market Watch"><IconMarketWatch /></Tool>
    <Tool label="Data Window"><IconDataWindow /></Tool>
    <Tool label="Navigator"><IconNavigator /></Tool>
    <Tool label="Toolbox"><IconToolbox /></Tool>
    <Tool label="Strategy Tester"><IconTester /></Tool>
    <Tool label="MetaEditor"><IconMetaEditor /></Tool>
    <Sep />
    <button type="button" className="h-[34px] w-[114px] shrink-0 flex items-center gap-1 pl-[5px] text-[14px] whitespace-nowrap">
      <IconNewOrder />
      New Order
    </button>
    <button
      type="button"
      aria-pressed="true"
      className="h-[34px] w-[123px] shrink-0 flex items-center gap-1 pl-[5px] text-[14px] whitespace-nowrap bg-[#c0dcf3] border border-[#90c8f6]"
    >
      <IconAutoTrading />
      AutoTrading
    </button>
    <Sep />
    <Tool label="Bar Chart"><IconBars /></Tool>
    <Tool label="Candlesticks" active><IconCandles /></Tool>
    <Tool label="Line Chart"><IconLine /></Tool>
    <Sep />
    <Tool label="Zoom In"><Magnifier plus /></Tool>
    <Tool label="Zoom Out"><Magnifier /></Tool>
    <Tool label="Tile Windows"><IconTile /></Tool>
    <Sep />
    <Tool label="Auto Scroll" active><IconAutoScroll /></Tool>
    <Tool label="Chart Shift" active><IconShift /></Tool>
    <Sep />
    <Tool label="Timeframes" drop><IconClock /></Tool>
    <Tool label="Templates" drop><IconTemplates /></Tool>
    <Sep />
    <Tool label="Trade Levels"><IconTradeLevels /></Tool>
    <div className="w-px h-full shrink-0 bg-[#a0a0a0]" />
    <Grip />
    <Tool label="Cursor" active><IconCursor /></Tool>
    <Tool label="Crosshair"><IconCrosshair /></Tool>
    <Sep />
    <Tool label="Vertical Line"><IconVLine /></Tool>
    <Tool label="Horizontal Line"><IconHLine /></Tool>
    <Tool label="Trendline"><IconTrend /></Tool>
    <Tool label="Text">
      <span className="font-['Liberation_Serif',serif] font-bold text-[24px] leading-6 text-[#606060]">A</span>
    </Tool>
    <Tool label="Text Label"><IconTextLabel /></Tool>
    <Tool label="Angle"><IconAngle /></Tool>
    <Tool label="Ellipse"><IconEllipse /></Tool>
    <Tool label="Rectangle"><IconRect /></Tool>
    <Tool label="Triangle"><IconTriangle /></Tool>
    <Tool label="Objects" drop><IconObjects /></Tool>
    <div className="w-px h-full shrink-0 bg-[#a0a0a0]" />
    <div className="ml-auto flex items-center gap-5 pr-[7px]">
      <button type="button" aria-label="Search">
        <svg viewBox="0 0 18 18" className="w-[18px] h-[18px]" fill="none">
          <path d="M2.500 15.500l6-6" stroke="#2a5cc8" strokeWidth="3.500" strokeLinecap="round" />
          <circle cx="11.500" cy="6.500" r="4.500" fill="#e8f2ff" stroke="#3468c8" strokeWidth="1.800" />
        </svg>
      </button>
      <button type="button" aria-label="Chat">
        <svg viewBox="0 0 28 20" className="w-[28px] h-5" fill="#f4f4f6" stroke="#8c8c90" strokeWidth="1.400">
          <path d="M18 1c5 0 9 2.500 9 6 0 2.500-2 4.500-4 5.500l1 4-5-3.500c-5 0-9-2-9-6s3-6 8-6z" />
          <path d="M7 8c4 0 7 2 7 4.500S11 17 8 17l-3 2.500V16.500C2.500 16 1 14.500 1 12.500 1 10 3.500 8 7 8z" />
        </svg>
      </button>
      <div className="w-[56px] h-[22px] -ml-1.5 border-2 border-[#8c8c8c] bg-[#d4d4d4]">
        <div className="w-1/4 h-full bg-gradient-to-b from-[#44d83c] to-[#2c9c28]" />
      </div>
    </div>
  </div>
);

const ChartArea = () => (
  <main className="flex-1 min-h-0 flex flex-col border-t-2 border-l-2 border-t-[#696969] border-l-[#8c8c8c] ml-px pl-px pt-0.5 text-[12px] leading-4 font-['DejaVu_Sans_Condensed','DejaVu_Sans',sans-serif]">
    <div className="flex-1 min-h-0 flex">
      <section className="flex-1 relative border border-black overflow-hidden">
        <PriceChart />
        <div className="relative flex items-center gap-0.5 pl-1 pt-1">
          <svg viewBox="0 0 19 16" className="w-[19px] h-4" aria-hidden="true">
            <rect x="0.500" y="0.500" width="18" height="15" fill="#f6f6fa" stroke="#7070a8" />
            <path d="M1 1h17v3H1z" fill="#8c90e0" />
            <path d="M3 6h6M3 8.500h6M3 11h6M3 13.500h6" stroke="#f08070" strokeWidth="1.400" />
            <path d="M11 6h6M11 8.500h6M11 11h6M11 13.500h6" stroke="#7088f0" strokeWidth="1.400" />
          </svg>
          <svg viewBox="0 0 20 16" className="w-5 h-4" aria-hidden="true">
            <path d="M0 2l5-1 1 6h3v7l-2 1H1l-1-2z" fill="#2828e0" stroke="#101080" strokeWidth="0.600" />
            <path d="M20 2l-5-1-1 6h-3v7l2 1h6l1-2z" fill="#d03030" stroke="#801010" strokeWidth="0.600" />
            <path d="M7 1h6M7 4h5" stroke="#888" strokeWidth="1.400" />
          </svg>
          <span className="pl-1 pt-0.5">GBPJPY,H1</span>
        </div>
      </section>
      <aside className="w-[71px] relative shrink-0 overflow-hidden">
        <ol className="-mt-[3px]">
          {PRICES.map((price) => (
            <li key={price} className="h-8 flex items-center gap-px">
              <span className="w-[3px] h-px bg-black" />
              {price}
            </li>
          ))}
        </ol>
        <div className="absolute left-0.5 top-[656px] w-[54px] border-t-2 border-[#dda0dd] bg-black text-white text-center leading-[14px]">
          140.873
        </div>
      </aside>
    </div>
    <div className="h-[218px] shrink-0 flex pt-px">
      <section className="flex-1 relative border border-black overflow-hidden">
        <MacdChart />
        <p className="relative pl-0.5 pt-[3px]">MACD(GBPJPY/H1, 12, 26, 9) -0.3594 -0.3156 0.0000 -0.0438</p>
      </section>
      <aside className="w-[71px] shrink-0 flex flex-col justify-between">
        <div>
          <div className="w-[3px] h-px bg-black" />
          <div className="pl-1">0.3257</div>
        </div>
        <div className="pl-1 mb-9">0.0000</div>
        <div>
          <div className="pl-1">-0.4676</div>
          <div className="w-[3px] h-px bg-black" />
        </div>
      </aside>
    </div>
    <div className="h-[23px] shrink-0 flex overflow-hidden">
      {TIMES.map((time) => (
        <div key={time} className="w-32 shrink-0">
          <div className="w-px h-[3px] bg-black" />
          <div className="whitespace-nowrap">{time}</div>
        </div>
      ))}
    </div>
  </main>
);

const Tabs = () => (
  <div className="h-[27px] shrink-0 flex border-t border-black pl-[3px] text-[14px] leading-5" role="tablist">
    {CHART_TABS.map((tab, i) => {
      const active = i === CHART_TABS.length - 1;
      return (
        <button
          key={tab}
          type="button"
          role="tab"
          aria-selected={active}
          className={
            active
              ? '-mt-px h-[25px] px-[13px] pt-0.5 bg-white border border-t-0 border-r-2 border-b-2 border-black'
              : 'h-[25px] pl-[14px] text-[#808080] flex items-center'
          }
        >
          <span>{tab}</span>
          {!active && (
            <span className={`ml-[13px] w-px h-[18px] ${i < CHART_TABS.length - 2 ? 'bg-[#808080]' : 'bg-transparent'}`} />
          )}
        </button>
      );
    })}
    <div className="ml-auto flex items-center gap-[22px] pr-[15px]">
      <button type="button" aria-label="Scroll tabs left">
        <svg viewBox="0 0 5 9" className="w-[5px] h-[9px]" fill="#a0a0a0"><path d="M5 0v9L0 4.500z" /></svg>
      </button>
      <button type="button" aria-label="Scroll tabs right">
        <svg viewBox="0 0 5 9" className="w-[5px] h-[9px]" fill="#a0a0a0"><path d="M0 0v9l5-4.500z" /></svg>
      </button>
    </div>
  </div>
);

const StatusBar = () => (
  <footer className="h-[29px] shrink-0 flex items-stretch pt-1 border-t border-t-white border-b-2 border-b-[#484848] text-[14px] leading-[23px]">
    <div className="flex-1 pl-0.5">For Help, press F1</div>
    <div className="w-[165px] border-l border-[#a0a0a0] pl-[5px]">Default</div>
    <div className="w-[125px] border-l border-[#a0a0a0]" />
    <div className="w-[89px] border-l border-[#a0a0a0]" />
    <div className="w-[89px] border-l border-[#a0a0a0]" />
    <div className="w-[85px] border-l border-[#a0a0a0]" />
    <div className="w-[87px] border-l border-[#a0a0a0]" />
    <div className="w-[84px] border-l border-[#a0a0a0]" />
    <div className="w-[147px] border-l border-[#a0a0a0] pl-[5px] flex items-center gap-[5px]">
      <svg viewBox="0 0 21 21" className="w-[21px] h-[21px]" aria-hidden="true">
        <path d="M1 2l3-2h10v18l-2 2H3l-2-2z" fill="#2c9ce8" stroke="#1468b0" />
        <path d="M5 3h8v15H5z" fill="#6cc4fa" />
        <path d="M7 6h5M7 9h5" stroke="#fff" strokeWidth="1.500" />
        <circle cx="15.500" cy="15.500" r="5" fill="#7cc030" stroke="#3c7810" />
        <path d="M13 15l2.500 3L18 14" fill="none" stroke="#fff" strokeWidth="1.800" />
      </svg>
      28 / 3 Kb
    </div>
  </footer>
);

const App: React.FC = () => (
  <div className="h-screen flex flex-col overflow-hidden bg-[#f0f0f0] text-black font-['Open_Sans','Noto_Sans',sans-serif]">
    <TitleBar />
    <MenuBar />
    <Toolbar />
    <ChartArea />
    <Tabs />
    <StatusBar />
  </div>
);

export default App;
